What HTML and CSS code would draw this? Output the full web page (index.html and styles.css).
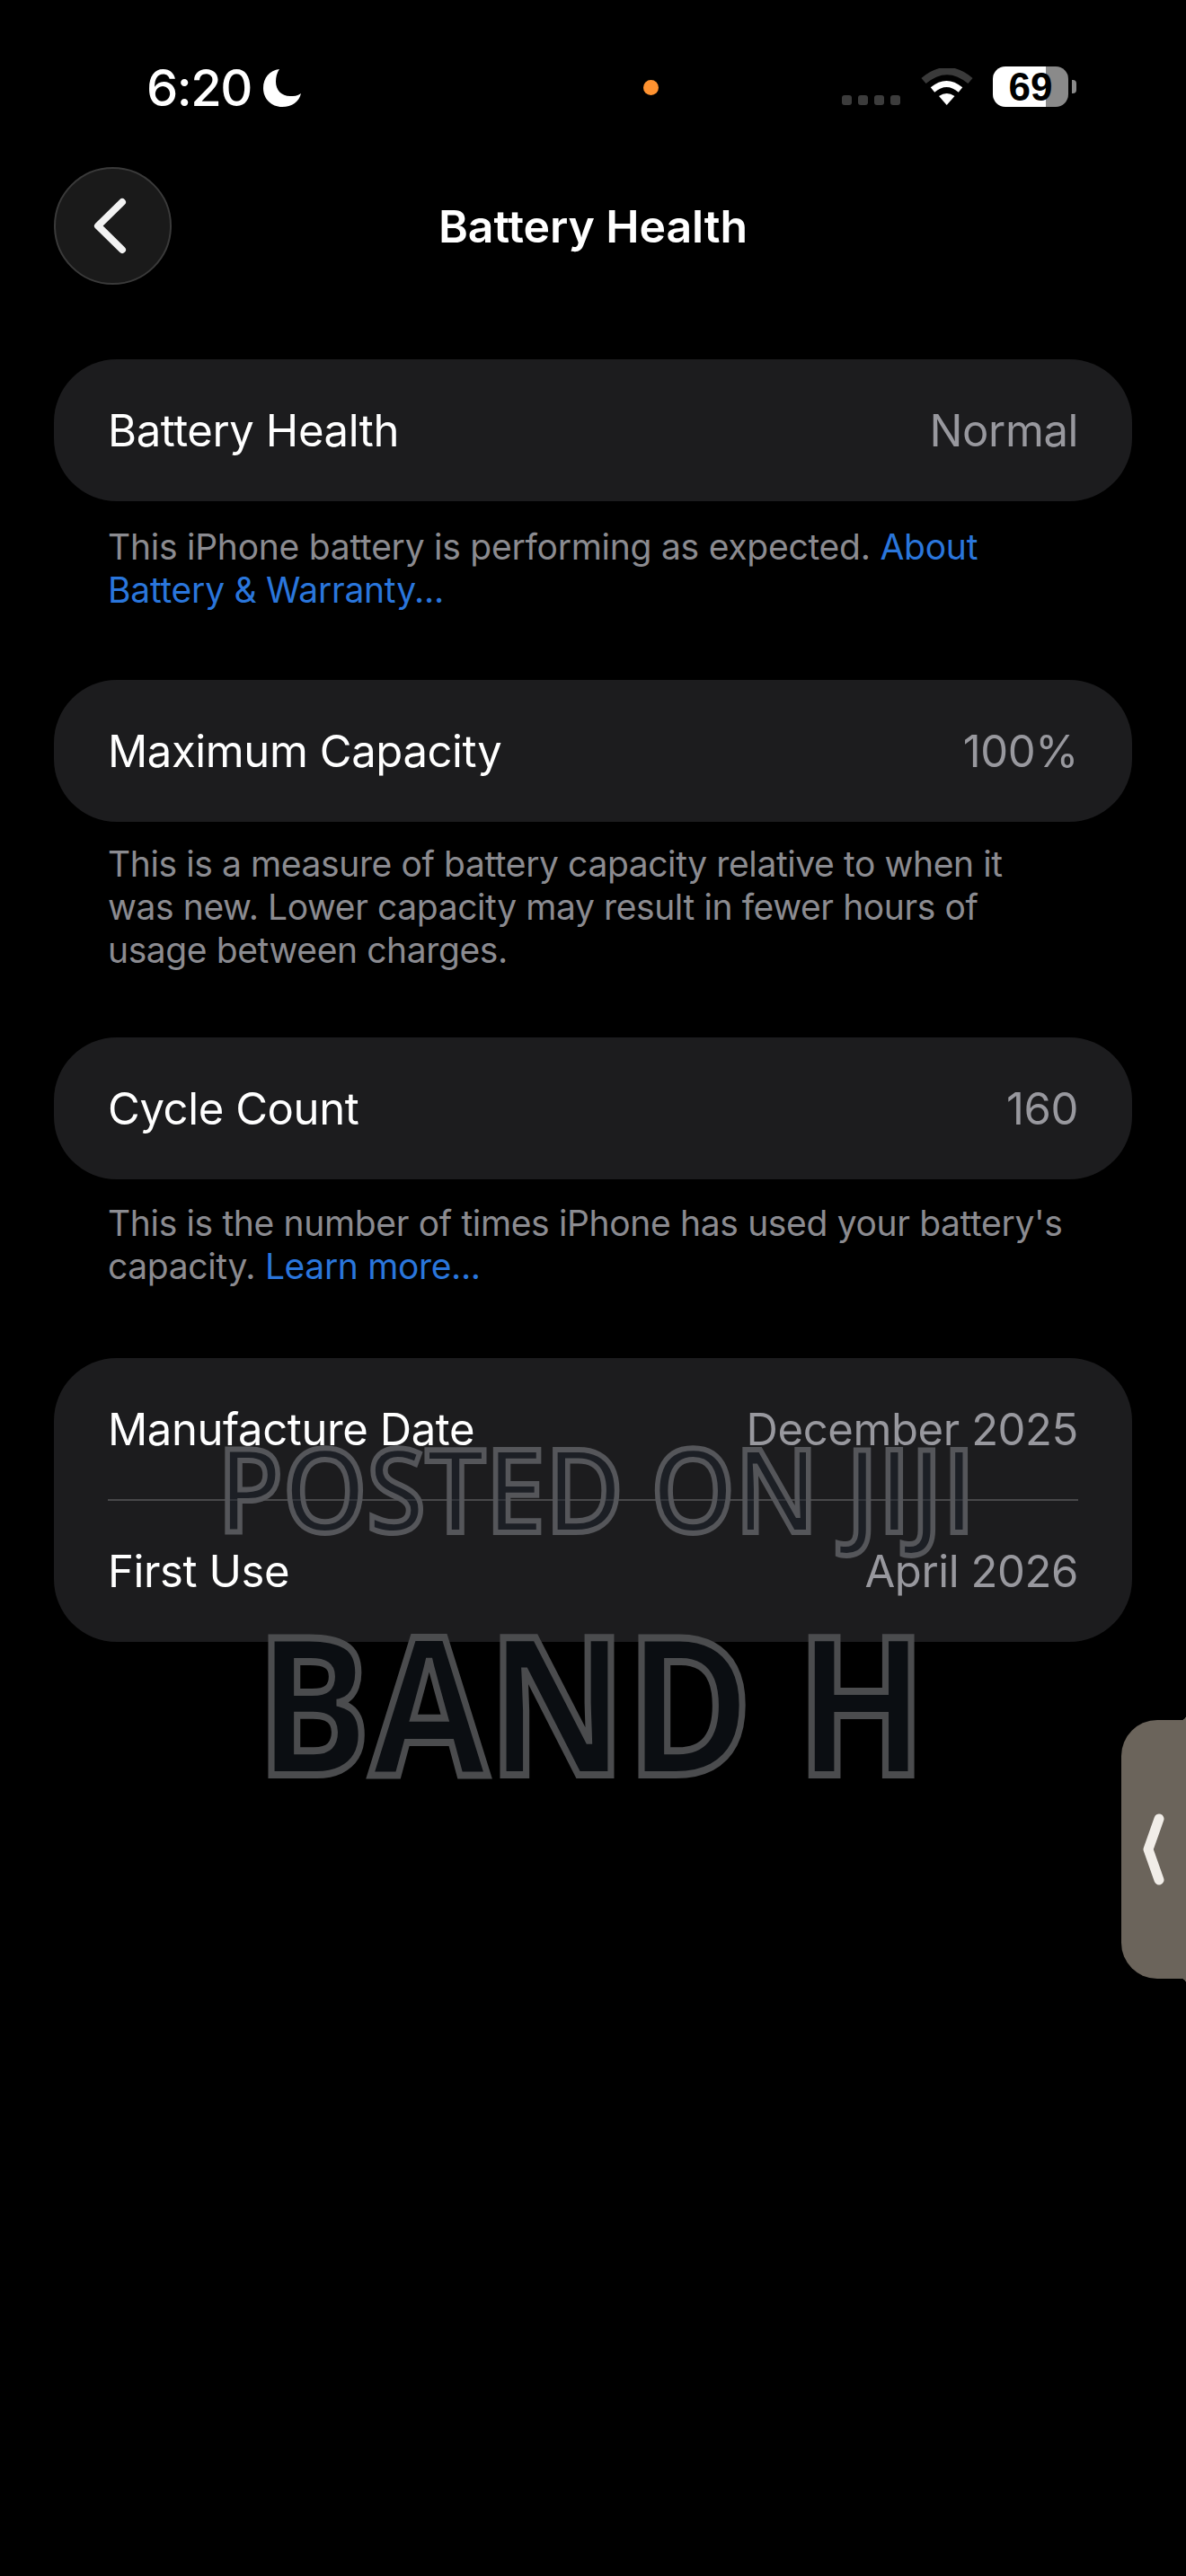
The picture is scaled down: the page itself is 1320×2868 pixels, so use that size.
FILE: index.html
```html
<!DOCTYPE html>
<html lang="en">
<head>
  <meta charset="UTF-8">
  <meta name="viewport" content="width=device-width, initial-scale=1.0">
  <title>Battery Health</title>
  <link rel="stylesheet" href="styles.css">
</head>
<body>
  <div class="status">
    <span class="time">6:20</span>
    <svg class="moon" width="42" height="42" viewBox="0 0 42 42">
      <path fill="#fff" d="M18 0C7 1 0 10 0 21c0 12 9 21 21 21 11 0 19-6 21-15-4 3-8 3-12 3-10 0-16-7-16-16 0-5 1-10 4-14z"/>
    </svg>
    <span class="orange-dot"></span>
    <div class="cell-dots"><i></i><i></i><i></i><i></i></div>
    <svg class="wifi" width="58" height="41" viewBox="0 0 58 41">
      <path fill="none" stroke="#3a3a3a" stroke-width="8" d="M3 14Q29-8 55 14"/>
      <path fill="none" stroke="#fff" stroke-width="7" d="M13 24Q28.5 11 44 24"/>
      <path fill="#fff" d="M28.7 41L20 31Q28.7 25 37.5 31z"/>
    </svg>
    <div class="battery"><span>69</span></div>
    <span class="battery-tip"></span>
  </div>

  <div class="nav">
    <div class="back">
      <svg width="44" height="67" viewBox="0 0 44 67">
        <path fill="none" stroke="#f2f2f2" stroke-width="8" stroke-linecap="round" stroke-linejoin="round" d="M36 7L9 33.500L36 60"/>
      </svg>
    </div>
    <h1 class="title">Battery Health</h1>
  </div>

  <div class="card"><span class="label">Battery Health</span><span class="value">Normal</span></div>
  <p class="note">This iPhone battery is performing as expected. <a class="link">About<br>Battery &amp; Warranty...</a></p>

  <div class="card"><span class="label">Maximum Capacity</span><span class="value">100%</span></div>
  <p class="note note-long">This is a measure of battery capacity relative to when it<br>was new. Lower capacity may result in fewer hours of<br>usage between charges.</p>

  <div class="card"><span class="label">Cycle Count</span><span class="value">160</span></div>
  <p class="note note-cycle">This is the number of times iPhone has used your battery's<br>capacity. <a class="link">Learn more...</a></p>

  <div class="group">
    <div class="card row"><span class="label">Manufacture Date</span><span class="value">December 2025</span></div>
    <div class="divider"></div>
    <div class="card row"><span class="label">First Use</span><span class="value">April 2026</span></div>
  </div>

  <div class="mark mark-posted">POSTED ON JIJI</div>
  <div class="mark mark-band">BAND H</div>

  <div class="side-tab">
    <svg width="24" height="80" viewBox="0 0 24 80">
      <path fill="none" stroke="#f1ede8" stroke-width="11" stroke-linecap="round" stroke-linejoin="round" d="M18 6L6 40L18 74"/>
    </svg>
  </div>
</body>
</html>
```

FILE: styles.css
```css
* {
  box-sizing: border-box;
}

body {
  font-family: Inter, "Liberation Sans", sans-serif;
  background-color: #000;
  color: #fff;
  width: 1320px;
  height: 2868px;
  margin: 0;
  overflow: hidden;
  position: relative;
}

/* status bar */
.status {
  display: flex;
  align-items: flex-start;
  height: 186px;
  padding: 74px 0 0 163px;
}

.time {
  font-size: 56px;
  font-weight: 500;
  line-height: 48px;
  width: 130px;
  letter-spacing: -1.5px;
}

.moon {
  margin-top: 3px;
}

.orange-dot {
  width: 17px;
  height: 17px;
  margin: 15px 0 0 381px;
  border-radius: 50%;
  background-color: #ff9230;
}

.cell-dots {
  display: flex;
  gap: 7px;
  margin: 32px 0 0 204px;
}

.cell-dots i {
  width: 11px;
  height: 11px;
  border-radius: 3px;
  background-color: #3c3c3c;
}

.wifi {
  margin: 2px 0 0 23px;
}

.battery {
  display: flex;
  justify-content: center;
  align-items: center;
  width: 84px;
  height: 45px;
  margin-left: 22px;
  border-radius: 14px;
  background: linear-gradient(to right, #fff 59px, #8a8a8a 59px);
  color: #000;
  font-family: "Liberation Sans", sans-serif;
  font-size: 44px;
  font-weight: bold;
}

.battery-tip {
  width: 5px;
  height: 15px;
  margin: 15px 0 0 4px;
  border-radius: 0 4px 4px 0;
  background-color: #8a8a8a;
}

/* nav */
.nav {
  display: flex;
  align-items: center;
  height: 131px;
  margin: 0 60px 83px;
  position: relative;
}

.back {
  display: flex;
  justify-content: center;
  align-items: center;
  width: 131px;
  height: 131px;
  padding-right: 8px;
  border: 2px solid #3a3a3a;
  border-radius: 50%;
  background-color: #1a1a1a;
}

.title {
  flex: 1;
  margin: 0 131px 0 0;
  text-align: center;
  font-size: 50px;
  font-weight: 600;
  letter-spacing: -0.1px;
}

/* cards */
.card {
  display: flex;
  justify-content: space-between;
  align-items: center;
  height: 158px;
  margin: 0 60px;
  padding: 0 60px;
  border-radius: 70px;
  background-color: #1c1c1e;
}

.label {
  font-size: 49px;
  letter-spacing: -0.4px;
}

.value {
  font-size: 49px;
  letter-spacing: -0.4px;
  color: #98989e;
}

.note {
  margin: 0;
  padding: 27px 40px 76px 120px;
  font-size: 39px;
  line-height: 48px;
  letter-spacing: -0.25px;
  color: #8b8b90;
}

.note-long {
  padding-top: 23px;
  padding-bottom: 73px;
  letter-spacing: -0.4px;
}

.note-cycle {
  padding-top: 25px;
  padding-bottom: 78px;
  letter-spacing: -0.35px;
}

.link {
  color: #2a76dc;
}

.group {
  margin: 0 60px;
  border-radius: 70px;
  background-color: #1c1c1e;
  position: relative;
}

.row {
  margin: 0;
  background: none;
}

.divider {
  height: 2px;
  margin: -1px 60px;
  background-color: #48484a;
  position: relative;
}

/* watermark */
.mark {
  position: absolute;
  font-family: "Open Sans", sans-serif;
  white-space: nowrap;
  line-height: 1;
  transform-origin: left center;
}

.mark-posted {
  left: 242px;
  top: 1593px;
  font-size: 128px;
  font-weight: 600;
  color: rgba(30, 34, 44, 0.55);
  -webkit-text-stroke: 6px #55565a;
  transform: scaleX(0.927);
}

.mark-band {
  left: 285px;
  top: 1786px;
  font-size: 214px;
  font-weight: 700;
  color: #0b0e12;
  -webkit-text-stroke: 8px #4b4c4e;
  transform: scaleX(0.885);
}

/* floating tab on right edge */
.side-tab {
  position: absolute;
  left: 1248px;
  top: 1915px;
  display: flex;
  align-items: center;
  width: 72px;
  height: 288px;
  padding-left: 24px;
  border-radius: 40px 0 0 40px;
  background-color: #6b645b;
}

.side-tab::before,
.side-tab::after {
  content: "";
  position: absolute;
  right: 0;
  width: 6px;
  height: 6px;
}

.side-tab::before {
  top: -6px;
  background: radial-gradient(circle at 0 0, transparent 6px, #6b645b 6.5px);
}

.side-tab::after {
  bottom: -6px;
  background: radial-gradient(circle at 0 100%, transparent 6px, #6b645b 6.5px);
}
```
